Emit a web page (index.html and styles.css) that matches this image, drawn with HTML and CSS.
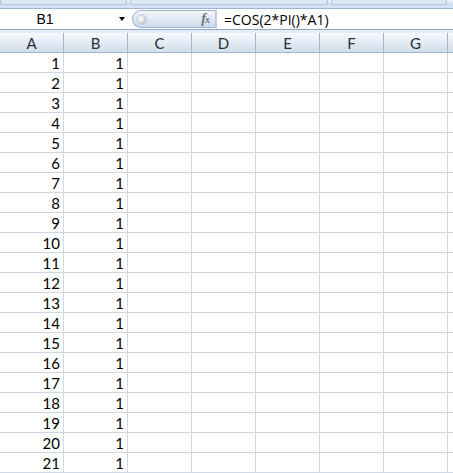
FILE: index.html
```html
<!DOCTYPE html>
<html>
<head>
<meta charset="utf-8">
<link rel="stylesheet" href="styles.css">
</head>
<body>
<div class="app">
  <div class="ribbon-edge">
    <div class="tab t1"></div>
    <div class="tab t2"></div>
    <div class="tab t3"></div>
  </div>
  <div class="formula-bar">
    <div class="namebox">
      <span class="name">B1</span>
      <span class="arrow"></span>
    </div>
    <div class="pill">
      <span class="knob"></span>
      <span class="fx"><i>f</i><i class="x">x</i></span>
    </div>
    <div class="formula">=COS(2*PI()*A1)</div>
  </div>
  <div class="band"></div>
  <div class="sheet" id="sheet">
    <div class="hdr">A</div><div class="hdr">B</div><div class="hdr">C</div><div class="hdr">D</div><div class="hdr">E</div><div class="hdr">F</div><div class="hdr">G</div><div class="hdr"></div>
  </div>
</div>
<script>
  var s = document.getElementById('sheet');
  for (var r = 1; r <= 21; r++) {
    for (var c = 0; c < 8; c++) {
      var d = document.createElement('div');
      d.className = 'cell';
      if (c === 0) d.textContent = r;
      if (c === 1) d.textContent = '1';
      s.appendChild(d);
    }
  }
</script>
</body>
</html>
```

FILE: styles.css
```css
html, body {
  margin: 0;
  padding: 0;
  background: #ffffff;
}
body {
  width: 453px;
  height: 473px;
  overflow: hidden;
  font-family: "Lato", "Open Sans", "Liberation Sans", sans-serif;
  font-size: 15px;
  color: #000;
}
.app {
  display: flex;
  flex-direction: column;
  width: 453px;
}
.ribbon-edge {
  height: 8px;
  border-bottom: 1px solid #9fb5d0;
  background: linear-gradient(#eaf1fa 0, #eaf1fa 2px, #c9dcf2 3px, #d6e4f5 8px);
  display: flex;
  gap: 3px;
  padding-right: 6px;
}
.tab {
  height: 4px;
  border-bottom: 1px solid #b3c6de;
  border-left: 1px solid #b3c6de;
  border-right: 1px solid #b3c6de;
  border-radius: 0 0 3px 3px;
  background: #dfe9f6;
}
.t1 { width: 125px; margin-left: 0; }
.t2 { width: 196px; }
.t3 { flex: 1; }
.formula-bar {
  height: 20px;
  display: flex;
  align-items: stretch;
  background: #fff;
  border-bottom: 1px solid #8fa7c4;
}
.namebox {
  width: 128px;
  display: flex;
  align-items: center;
}
.name {
  width: 90px;
  text-align: center;
  font-family: "Liberation Sans", sans-serif;
  font-size: 14px;
}
.arrow {
  margin-left: 29px;
  width: 0;
  height: 0;
  border-left: 3.5px solid transparent;
  border-right: 3.5px solid transparent;
  border-top: 4px solid #000;
}
.pill {
  width: 84px;
  margin: 1px 0 0 4px;
  height: 18px;
  box-sizing: border-box;
  border: 1px solid #9ab0cc;
  border-right: 1px solid #b9c8da;
  border-radius: 10px 0 0 10px;
  background: linear-gradient(#f3f7fc, #dfe8f4 50%, #cfdcec);
  display: flex;
  align-items: center;
  justify-content: space-between;
  padding: 0 6px 0 3px;
}
.knob {
  width: 11px;
  height: 11px;
  border-radius: 50%;
  background: radial-gradient(circle at 40% 40%, #ffffff 0, #dfe3e8 40%, #a8b0ba 100%);
  border: 1px solid #c7cfd9;
  box-sizing: border-box;
}
.fx {
  font-family: "Liberation Serif", serif;
  font-size: 14px;
  color: #6f747c;
  font-weight: bold;
  letter-spacing: -1px;
}
.fx .x {
  font-size: 10px;
}
.formula {
  flex: 1;
  padding-left: 7px;
  display: flex;
  align-items: center;
  font-size: 14px;
  font-family: "Open Sans", "Liberation Sans", sans-serif;
  border-left: 1px solid #c5d2e3;
}
.band {
  height: 3px;
  background: #e4edf8;
}
.sheet {
  display: grid;
  grid-template-columns: repeat(7, 64px) 10px;
  grid-auto-rows: 20px;
}
.hdr {
  box-sizing: border-box;
  border-right: 1px solid #9eb6ce;
  border-bottom: 1px solid #9eb6ce;
  background: linear-gradient(#f9fbfd, #e4eaf4 50%, #d4ddeb);
  text-align: center;
  line-height: 20px;
  font-size: 15px;
  color: #25313f;
}
.cell {
  box-sizing: border-box;
  border-right: 1px solid #d0d7e5;
  border-bottom: 1px solid #d0d7e5;
  text-align: right;
  padding-right: 3px;
  line-height: 20px;
  font-size: 15px;
}
```
